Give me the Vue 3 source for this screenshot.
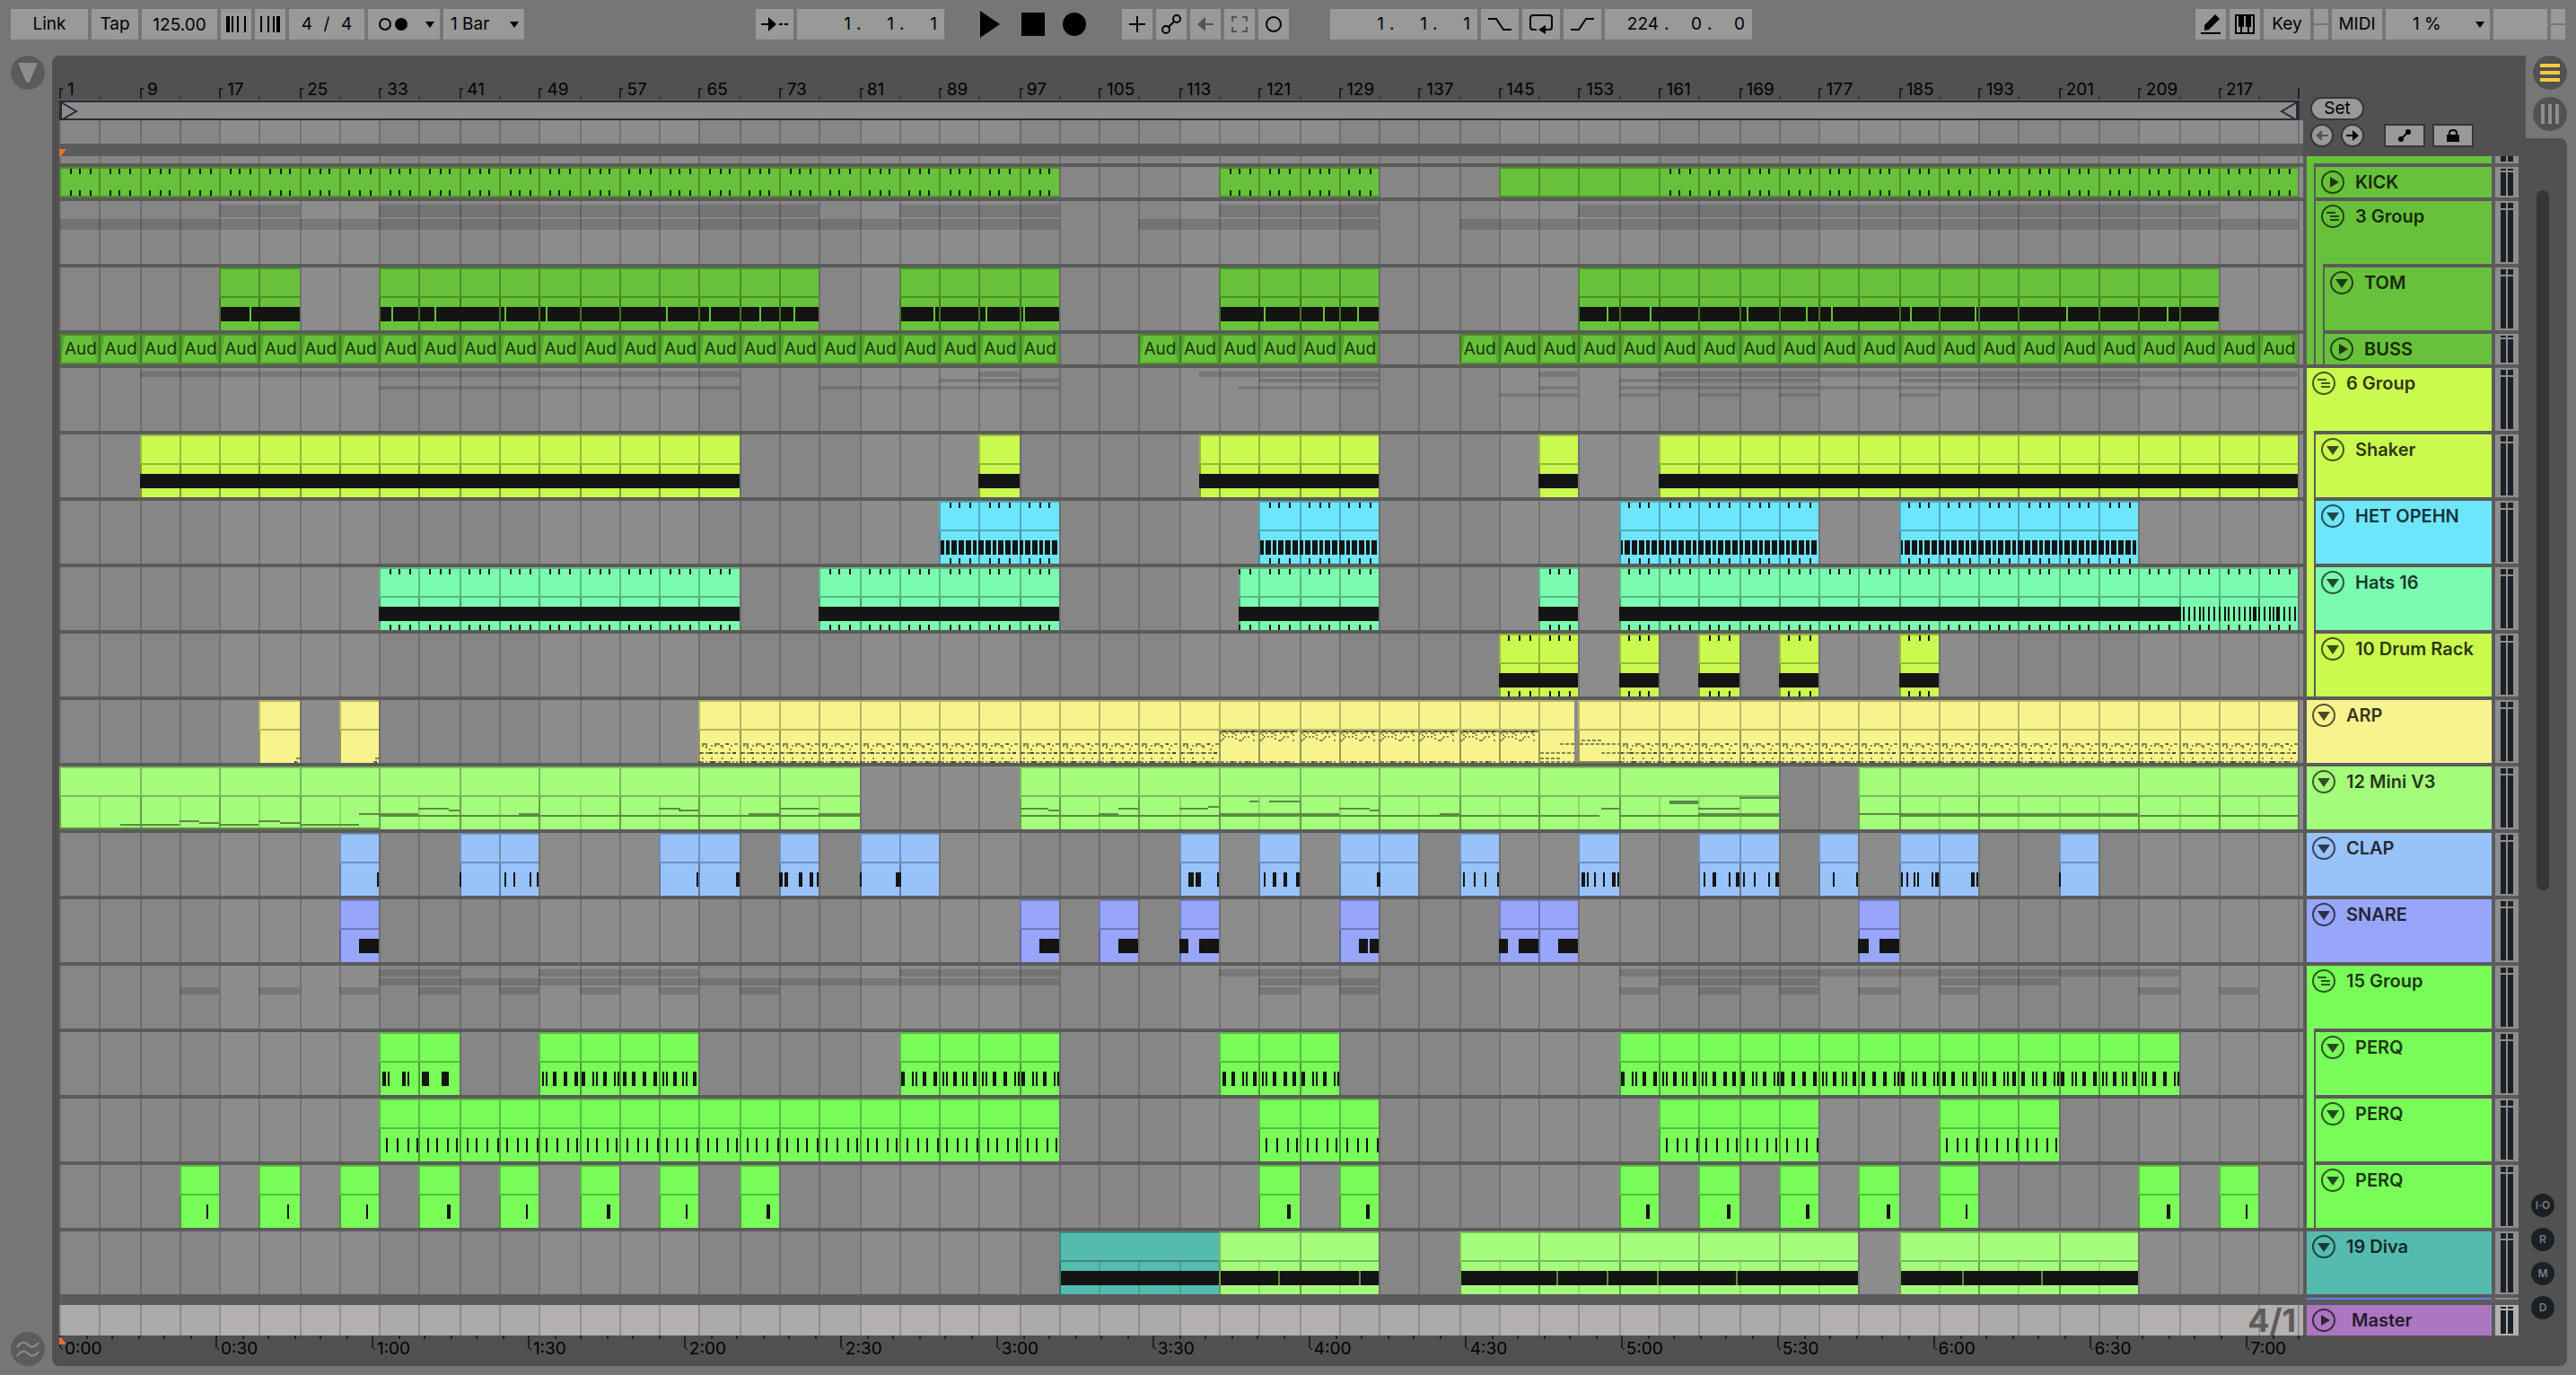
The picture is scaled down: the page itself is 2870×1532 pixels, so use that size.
<script setup>
const BAR = 11.1375
const END = 2494

// Converts a bar position to lane units on the two-pixel raster
const snap = (bar) => 2 * Math.round((bar * BAR) / 2)
const box = (x, y, w, h) => `M${x} ${y}h${w}v${h}h${-w}z`

const range = (a, b, step = 1) => {
  const out = []
  for (let i = a; i < b; i += step) out.push(i)
  return out
}

// Clip extents are in cells of four bars
const C = {
  kick: [[0, 25], [29, 33], [36, 56]],
  tom: [[4, 6], [8, 19], [21, 25], [29, 33], [38, 54]],
  buss: [[0, 25], [27, 33], [35, 56]],
  shaker: [[2, 17], [23, 24], [28.5, 33], [37, 38], [40, 56]],
  het: [[22, 25], [30, 33], [39, 44], [46, 52]],
  hats: [[8, 17], [19, 25], [29.5, 33], [37, 38], [39, 56]],
  drum: [[36, 38], [39, 40], [41, 42], [43, 44], [46, 47]],
  arp: [[5, 6], [7, 8], [16, 37.9], [38, 56]],
  mini: [[0, 20], [24, 43], [45, 56]],
  clap: [[7, 8], [10, 12], [15, 17], [18, 19], [20, 22], [28, 29], [30, 31], [32, 34], [35, 36], [38, 39], [41, 43], [44, 45], [46, 48], [50, 51]],
  snare: [[7, 8], [24, 25], [26, 27], [28, 29], [32, 33], [36, 38], [45, 46]],
  perq1: [[8, 10], [12, 16], [21, 25], [29, 32], [39, 53]],
  perq2: [[8, 25], [30, 33], [40, 44], [47, 50]],
  perq3: [[3, 4], [5, 6], [7, 8], [9, 10], [11, 12], [13, 14], [15, 16], [17, 18], [30, 31], [32, 33], [39, 40], [41, 42], [43, 44], [45, 46], [47, 48], [52, 53], [54, 55]],
  diva: [[25, 29, '#56bbaf'], [29, 33], [35, 45], [46, 52]],
}

const cellsOf = (clips) => clips.flatMap(([a, b]) => range(Math.ceil(a), b))
const band = (clips) => clips.map(([a, b]) => box(snap(a * 4), 44, snap(b * 4) - snap(a * 4), 16)).join('')
const bars = (list) => list.map(([x, w]) => box(x - 66, 44, w, 16)).join('')

// Edge marks, three in each cell
const marks = (clips, low) =>
  clips.flatMap(([a, b]) => range(a * 4, b * 4).filter((n) => n % 4).map((n) => box(snap(n), 2, 2, 6) + box(snap(n), low, 2, 6))).join('')

function tomNotes() {
  const gaps = [278, 436, 484, 562, 608, 742, 790, 846, 884, 1040, 1098, 1140, 1408, 1474, 1512, 1790, 1838, 1946, 2012, 2040, 2128, 2200, 2302, 2414]
  const cuts = gaps.map((x) => x - 66)
  return cellsOf(C.tom).map((c) => {
    const to = snap((c + 1) * 4)
    let x = snap(c * 4) + (c % 5 === 0 ? 0 : 2)
    let d = ''
    for (const g of cuts) {
      if (g > x && g < to - 2) {
        d += box(x, 44, g - x, 16)
        x = g + 2
      }
    }
    return d + box(x, 44, to - x, 16)
  }).join('')
}

function hetNotes() {
  return C.het.map(([a, b]) => range(0, (b - a) * 6).map((i) => {
    const x = snap(a * 4 + (i * 2) / 3) + (i ? 0 : 2)
    const next = snap(a * 4 + ((i + 1) * 2) / 3)
    return box(x, 44, next - x - 2, 16)
  }).join('')).join('')
}

function hatsNotes() {
  const solid = band([...C.hats.slice(0, 4), [39, 53]])
  const thin = range(212, 224, 0.5).map((n) => box(snap(n), 44, 2, 16)).join('')
  return solid + thin + [2446, 2470].map((x) => box(x, 44, 2, 16)).join('')
}

const hits = {
  12: 'PBBB', 13: 'BPBP', 14: 'BBBB', 15: 'PBPB', 21: 'BPBB', 22: 'PBPB', 23: 'PBBP', 24: 'BPBP',
  29: 'BBPB', 30: 'PBBB', 31: 'BPBP', 39: 'BPBB', 40: 'PBPB', 41: 'PBBB', 42: 'BPBP', 43: 'BBBB',
  44: 'PBPB', 45: 'BBBP', 46: 'BPBP', 47: 'BBPB', 48: 'PBPB', 49: 'BPBP', 50: 'BPBB', 51: 'PBPB', 52: 'PBBP',
}
function perqOneNotes() {
  let d = bars([[426, 4], [432, 2], [448, 4], [454, 2], [470, 8], [492, 8]])
  for (const [cell, kinds] of Object.entries(hits)) {
    [...kinds].forEach((kind, i) => {
      const x = snap(cell * 4 + i * 1.05 + 0.3)
      d += kind === 'B' ? box(x, 44, 4, 16) : box(x, 44, 2, 16) + box(x + 4, 44, 2, 16)
    })
  }
  return d
}
const perqTwoNotes = () => cellsOf(C.perq2).flatMap((c) => range(0, 4).map((i) => box(snap(c * 4 + i + 0.75), 44, 2, 16))).join('')
const perqThreeNotes = () => {
  const thin = [3, 5, 7, 11, 15, 47, 54]
  return C.perq3.map(([a]) => box(snap(a * 4 + 2.75), 44, thin.includes(a) ? 2 : 4, 16)).join('')
}

const clapNotes = () => bars([
  [420, 2], [512, 2], [562, 2], [572, 2], [590, 2], [598, 2], [776, 2], [820, 4], [868, 4], [874, 4], [890, 4], [902, 4], [910, 2],
  [958, 2], [998, 6], [1324, 6], [1332, 6], [1356, 2], [1408, 2], [1418, 4], [1430, 4], [1444, 4], [1534, 4], [1630, 2], [1642, 2],
  [1654, 2], [1668, 2], [1762, 4], [1768, 2], [1776, 2], [1786, 2], [1796, 4], [1802, 2], [1898, 2], [1908, 4], [1926, 2], [1934, 4],
  [1942, 2], [1954, 2], [1970, 2], [1978, 4], [2042, 2], [2068, 2], [2118, 2], [2124, 2], [2132, 2], [2136, 2], [2152, 2], [2156, 4],
  [2196, 4], [2202, 2], [2294, 2],
])
const snareNotes = () => bars([
  [400, 22], [1158, 22], [1246, 22], [1314, 10], [1336, 22], [1514, 10], [1526, 10], [1670, 10], [1692, 22], [1736, 22], [2070, 12], [2094, 22],
])

const miniLines = [
  [66, 422, 68, 2], [134, 200, 64, 2], [200, 222, 60, 2], [222, 244, 62, 2], [244, 288, 64, 2], [288, 312, 60, 2], [312, 334, 62, 2],
  [334, 400, 64, 2], [400, 422, 52, 2], [422, 466, 52, 4], [466, 500, 46, 2], [500, 512, 48, 2], [466, 958, 54, 2], [578, 600, 52, 2],
  [734, 758, 46, 2], [756, 778, 48, 2], [834, 868, 52, 2], [870, 912, 46, 2], [912, 958, 52, 2],
  [1136, 1168, 46, 2], [1168, 1180, 48, 2], [1136, 1782, 54, 2], [1224, 1246, 52, 2], [1246, 1268, 46, 2], [1314, 1346, 46, 2],
  [1346, 1358, 44, 2], [1358, 1492, 52, 2], [1392, 1402, 38, 2], [1414, 1448, 38, 2], [1492, 1526, 46, 2], [1526, 1536, 48, 2],
  [1604, 1626, 52, 2], [1784, 1804, 46, 2], [1804, 1982, 54, 2], [1860, 1892, 38, 4], [1892, 1938, 46, 2], [1892, 1982, 52, 2],
  [1938, 1982, 34, 2], [2070, 2382, 52, 2], [2116, 2560, 54, 2],
]
const miniNotes = () => miniLines.map(([a, b, y, h]) => box(a - 66, y, b - a, h)).join('')

// One arpeggio phrase: [x, y, width] within a cell
const phraseA = [
  [4, 48, 6], [18, 48, 6], [30, 48, 4], [40, 48, 4], [0, 50, 2], [4, 50, 2], [8, 50, 2], [14, 50, 2], [18, 50, 2], [24, 50, 4], [36, 50, 2],
  [8, 52, 2], [12, 54, 2], [26, 52, 2], [34, 54, 2], [0, 58, 6], [8, 58, 8], [18, 58, 4], [24, 58, 6], [32, 58, 4], [38, 58, 4],
  [4, 64, 2], [14, 64, 2], [26, 64, 2], [36, 64, 2], [0, 68, 6], [8, 68, 2], [12, 68, 8], [22, 68, 4], [28, 68, 8], [38, 68, 2], [42, 68, 2],
]
const accentA = [[2, 58, 2], [12, 58, 4], [26, 58, 2], [38, 58, 4], [32, 48, 2], [0, 68, 2], [14, 68, 4], [30, 68, 2]]
const phraseB = [
  [0, 34, 44], [2, 36, 2], [8, 36, 2], [14, 36, 4], [24, 36, 2], [30, 36, 2], [36, 36, 2], [4, 38, 2], [18, 38, 2], [38, 38, 2],
  [6, 40, 2], [10, 40, 2], [14, 40, 2], [28, 40, 2], [32, 40, 2], [4, 42, 2], [18, 42, 2], [26, 42, 2],
  [0, 44, 4], [22, 44, 4], [38, 44, 2], [0, 68, 6], [8, 68, 2], [12, 68, 8], [22, 68, 4], [28, 68, 8], [38, 68, 2],
]
const accentB = [[4, 34, 4], [12, 34, 2], [18, 34, 4], [28, 34, 4], [36, 34, 4], [14, 68, 2], [30, 68, 2]]
const stamp = (cells, notes) => cells.map((c) => notes.map(([x, y, w]) => box(snap(c * 4) + x, y, w, 2)).join('')).join('')
const dashes = (from, to, y) => range(from, to, 6).map((x) => box(x - 66, y, 4, 2)).join('')
const arpCellsA = [...range(16, 29), ...range(39, 56)]
const arpCellsB = range(29, 37)
const arpSoft = () => stamp(arpCellsA, phraseA) + stamp(arpCellsB, phraseB) +
  dashes(1738, 1754, 48) + dashes(1716, 1754, 58) + dashes(1716, 1738, 64) + dashes(1716, 1754, 68) +
  dashes(1762, 1782, 44) + dashes(1760, 1804, 48) + dashes(1784, 1804, 58) + box(1692, 68, 46, 2) +
  box(264, 64, 4, 2) + box(262, 68, 4, 2) + box(352, 64, 4, 2) + box(350, 68, 4, 2)
const arpDark = () => stamp(arpCellsA, accentA) + stamp(arpCellsB, accentB) + box(262, 68, 2, 2) + box(352, 68, 2, 2)

const divaCuts = [1424, 1514, 1734, 1790, 1846, 1934, 2186, 2274].map((x) => x - 66)
const divaSplits = () => divaCuts.map((x) => box(x, 44, 2, 16)).join('')
const divaNotes = () => C.diva.map(([a, b]) => box(snap(a * 4) + 2, 44, snap(b * 4) - snap(a * 4) - 2, 16)).join('')

// Builds the painted layers of one lane
function paint(track) {
  const h = track.h
  const layers = []
  const strips = (track.strips || []).map(([clips, y, sh]) => clips.map(([a, b]) => box(snap(a * 4), y, snap(b * 4) - snap(a * 4), sh)).join('')).join('')
  if (strips) layers.push({ d: strips, fill: 'rgba(0,0,0,.14)' })
  if (!track.clips) return layers
  const byColor = {}
  let head = ''
  let body = ''
  let faint = ''
  for (const [a, b, own] of track.clips) {
    const x0 = snap(a * 4)
    const w = snap(b * 4) - x0
    const color = own || track.clipColor || track.color
    byColor[color] = (byColor[color] || '') + box(x0, 0, w, h)
    head += box(x0, 0, w, 2)
    head += h > 40 ? box(x0, 32, w, 2) : box(x0, h - 2, w, 2)
    const top = h > 40 ? 30 : h - 4
    const seams = new Set([a, ...(track.seams || range(Math.ceil(a), b)).filter((s) => s >= a && s < b)])
    for (const s of seams) {
      head += box(snap(s * 4), 2, 2, top)
      if (h > 40) body += box(snap(s * 4), 34, 2, h - 34)
    }
    for (const c of range(Math.ceil(a), b)) if (!seams.has(c)) faint += box(snap(c * 4), 34, 2, h - 34)
  }
  for (const [fill, d] of Object.entries(byColor)) layers.push({ d, fill })
  layers.push({ d: head, fill: 'rgba(0,0,0,.26)' }, { d: body, fill: 'rgba(0,0,0,.38)' }, { d: faint, fill: 'rgba(0,0,0,.15)' })
  if (track.fades) {
    const d = cellsOf(track.clips).map((c) => {
      const x = snap(c * 4)
      const r = snap(c * 4 + 4)
      return `M${x} 2h6L${x + 2} 32h-2zM${r} 2h-8L${r - 2} 32h2z`
    }).join('')
    layers.push({ d, fill: 'rgba(0,0,0,.16)' })
  }
  if (track.soft) layers.push({ d: track.soft, fill: track.softFill })
  if (track.notes) layers.push({ d: track.notes, fill: track.noteFill || '#141414' })
  if (track.splits) layers.push({ d: track.splits, fill: '#5b8c45' })
  return layers
}

const GREEN = '#67c13a'
const LIME = '#cbfa4f'
const LEAF = '#79fd59'

const tracks = [
  { name: 'KICK', h: 34, icon: 'play', rails: [GREEN], color: GREEN, clips: C.kick, notes: marks([[0, 25], [29, 33], [40, 56]], 26) },
  { name: '3 Group', h: 70, icon: 'group', rails: [GREEN], color: GREEN, strips: [[C.tom, 4, 14], [C.buss, 20, 12]] },
  { name: 'TOM', h: 70, icon: 'fold', rails: [GREEN, GREEN], color: GREEN, clips: C.tom, notes: tomNotes() },
  { name: 'BUSS', h: 34, icon: 'play', rails: [GREEN, GREEN], color: GREEN, clips: C.buss, fades: true, labels: cellsOf(C.buss) },
  { name: '6 Group', h: 70, icon: 'group', rails: [], color: LIME, strips: [[C.shaker, 4, 6], [C.het, 12, 4], [C.hats, 20, 4], [C.drum, 28, 4]] },
  { name: 'Shaker', h: 70, icon: 'fold', rails: [LIME], color: LIME, clips: C.shaker, notes: band(C.shaker) },
  { name: 'HET OPEHN', h: 70, icon: 'fold', rails: [LIME], color: '#6de6fd', clips: C.het, notes: hetNotes() + marks(C.het, 64) },
  { name: 'Hats 16', h: 70, icon: 'fold', rails: [LIME], color: '#7afbb0', clips: C.hats, notes: hatsNotes() + marks(C.hats, 64) },
  { name: '10 Drum Rack', h: 70, icon: 'fold', rails: [LIME], color: LIME, clips: C.drum, notes: band(C.drum) + marks(C.drum, 64) },
  { name: 'ARP', h: 70, icon: 'fold', rails: [], color: '#f7f48d', clips: C.arp, soft: arpSoft(), softFill: '#8a8750', notes: arpDark(), noteFill: '#4c4a2c' },
  { name: '12 Mini V3', h: 70, icon: 'fold', rails: [], color: '#a5fd7c', clips: C.mini, seams: [...range(0, 20, 2), 24, ...range(25, 41, 2), 45, 46, 48, 52, 54], notes: miniNotes(), noteFill: '#5b8c45' },
  { name: 'CLAP', h: 70, icon: 'fold', rails: [], color: '#98c2fa', clips: C.clap, notes: clapNotes() },
  { name: 'SNARE', h: 70, icon: 'fold', rails: [], color: '#97a5fa', clips: C.snare, notes: snareNotes() },
  { name: '15 Group', h: 70, icon: 'group', rails: [], color: LEAF, strips: [[C.perq1, 4, 8], [C.perq2, 14, 8], [C.perq3, 24, 8]] },
  { name: 'PERQ', h: 70, icon: 'fold', rails: [LEAF], color: LEAF, clips: C.perq1, notes: perqOneNotes() },
  { name: 'PERQ', h: 70, icon: 'fold', rails: [LEAF], color: LEAF, clips: C.perq2, notes: perqTwoNotes() },
  { name: 'PERQ', h: 70, icon: 'fold', rails: [LEAF], color: LEAF, clips: C.perq3, notes: perqThreeNotes() },
  { name: '19 Diva', h: 70, icon: 'fold', rails: [], color: '#56bbaf', clipColor: '#a5fd7c', clips: C.diva, seams: [25, 29, 31, 35, 37, 39, 41, 43, 46, 48, 50], notes: divaNotes(), splits: divaSplits() },
].map((t) => ({ ...t, layers: paint(t) }))

const shade = range(0, 224, 32).map((b) => box(snap(b), 0, snap(b + 16) - snap(b), 70)).join('')
const gridLines = range(0, 57).map((c) => box(snap(c * 4), 0, 2, 70)).join('')
const barTicks = range(0, 28).map((i) => box(snap(i * 8), 0, 4, 2) + box(snap(i * 8), 2, 2, 10) + box(snap(i * 8 + 4), 10, 2, 2)).join('') + box(END, 0, 2, 12)
const FIVE = (5 / 1.92) * BAR
const timeTicks = range(0, 86).map((i) => {
  const x = 2 * Math.round((i * FIVE) / 2)
  return i % 6 ? box(x, 0, 2, 4) : box(x, 0, 2, 14) + box(x + 2, 14, 2, 2)
}).join('') + box(END, 0, 2, 4)

const barLabels = range(0, 28).map((i) => 1 + i * 8)
const timeLabels = range(0, 15).map((i) => `${Math.floor(i / 2)}:${i % 2 ? '30' : '00'}`)
</script>

<template>
  <div class="app">
    <header class="toolbar">
      <div class="group">
        <button class="ctl w86">Link</button>
        <button class="ctl w52">Tap</button>
        <input class="ctl w84" value="125.00" aria-label="Tempo" />
        <button class="ctl w34" aria-label="Nudge down">
          <svg width="22" height="18"><path d="M0 0h4v18H0zM6 0h2v18H6zM12 0h2v18h-2zM20 0h2v18h-2z" /></svg>
        </button>
        <button class="ctl w34" aria-label="Nudge up">
          <svg width="22" height="18"><path d="M0 0h2v18H0zM8 0h2v18H8zM14 0h2v18h-2zM18 0h4v18h-4z" /></svg>
        </button>
        <div class="ctl signature">
          <input value="4" aria-label="Beats" class="end" /><span>/</span><input value="4" aria-label="Beat value" />
        </div>
        <button class="ctl metro" aria-label="Metronome">
          <svg width="32" height="18"><circle cx="7" cy="9" r="6" fill="none" stroke="#000" stroke-width="2" /><circle cx="25" cy="9" r="7" /></svg>
          <svg width="10" height="7"><path d="M0 0h10L5 7z" /></svg>
        </button>
        <div class="pick w90">
          <select class="ctl" aria-label="Quantization"><option>1 Bar</option></select>
          <svg width="10" height="7"><path d="M0 0h10L5 7z" /></svg>
        </div>
      </div>

      <div class="group">
        <button class="ctl w42" aria-label="Follow">
          <svg width="30" height="18"><path d="M0 8h8V1l9 8-9 8v-7H0zM20 8h4v2h-4zM26 8h4v2h-4z" /></svg>
        </button>
        <div class="ctl position">
          <input value="1" aria-label="Bar" class="first" /><span>.</span><input value="1" aria-label="Beat" /><span>.</span><input value="1" aria-label="Sixteenth" />
        </div>
        <div class="transport">
          <button aria-label="Play"><svg width="26" height="30"><path d="M0 0l22 15L0 30z" /></svg></button>
          <button aria-label="Stop"><svg width="26" height="30"><path d="M0 2h26v26H0z" /></svg></button>
          <button aria-label="Record"><svg width="26" height="30"><circle cx="13" cy="15" r="13" /></svg></button>
        </div>
        <button class="ctl w34" aria-label="Overdub"><svg width="18" height="18"><path d="M8 0h2v8h8v2h-8v8H8v-8H0V8h8z" /></svg></button>
        <button class="ctl w34" aria-label="Automation arm">
          <svg width="24" height="22" fill="none" stroke="#000" stroke-width="2"><circle cx="6" cy="17" r="4" /><circle cx="18" cy="5" r="4" /><path d="M9 14l6-6" /></svg>
        </button>
        <button class="ctl w34 dim" aria-label="Re-enable automation"><svg width="18" height="16"><path d="M0 8l9-8v7h9v2H9v7z" /></svg></button>
        <button class="ctl w34 dim" aria-label="Capture">
          <svg width="18" height="18" fill="none" stroke="#555" stroke-width="2"><path d="M1 6V1h5M12 1h5v5M17 12v5h-5M6 17H1v-5" /></svg>
        </button>
        <button class="ctl w34" aria-label="Session record"><svg width="20" height="20"><circle cx="10" cy="10" r="8" fill="none" stroke="#000" stroke-width="2" /></svg></button>
        <div class="ctl position late">
          <input value="1" aria-label="Loop bar" class="first" /><span>.</span><input value="1" aria-label="Loop beat" /><span>.</span><input value="1" aria-label="Loop sixteenth" />
        </div>
        <button class="ctl w42" aria-label="Punch in"><svg width="26" height="14" fill="none" stroke="#000" stroke-width="2"><path d="M0 1h9l8 12h9" /></svg></button>
        <button class="ctl w42" aria-label="Loop">
          <svg width="26" height="22"><path d="M8 17H4q-3 0-3-3V4q0-3 3-3h18q3 0 3 3v10q0 3-3 3h-4" fill="none" stroke="#000" stroke-width="2" /><path d="M10 17l8-5v10z" /></svg>
        </button>
        <button class="ctl w42" aria-label="Punch out"><svg width="26" height="14" fill="none" stroke="#000" stroke-width="2"><path d="M0 13h9l8-12h9" /></svg></button>
        <div class="ctl position">
          <input value="224" aria-label="Length bars" class="first" /><span>.</span><input value="0" aria-label="Length beats" /><span>.</span><input value="0" aria-label="Length sixteenths" />
        </div>
      </div>

      <div class="group">
        <button class="ctl w34" aria-label="Draw mode"><svg width="22" height="22"><path d="M4 18v-6L16 0l5 5L9 17zM0 20h22v2H0z" /></svg></button>
        <button class="ctl w34" aria-label="Computer keyboard">
          <svg width="22" height="22"><path d="M1 1h20v20H1z" fill="none" stroke="#000" stroke-width="2" /><path d="M4 1h6v13H4zM12 1h6v13h-6zM6 14h2v7H6zM14 14h2v7h-2z" /></svg>
        </button>
        <button class="ctl w52">Key</button>
        <span class="leds"><i /><i /></span>
        <button class="ctl w56">MIDI</button>
        <div class="pick w116">
          <select class="ctl cpu" aria-label="CPU load"><option>1 %</option></select>
          <svg width="10" height="7"><path d="M0 0h10L5 7z" /></svg>
        </div>
        <span class="ctl w60" />
        <span class="leds"><i /><i /></span>
      </div>
    </header>

    <div class="main">
      <aside class="left">
        <button class="disc" aria-label="Show browser"><svg width="22" height="22"><path d="M2 0h18q2 0 1 2l-8 19q-2 2-4 0L1 2q-1-2 1-2z" fill="#8d8d8d" /></svg></button>
        <button class="disc" aria-label="Groove pool">
          <svg width="26" height="20" fill="none" stroke="#8d8d8d" stroke-width="2"><path d="M1 8q6-9 12-3t12-2M1 18q6-9 12-3t12-2" /></svg>
        </button>
      </aside>

      <main class="panel">
        <div class="top">
          <div class="timeline">
            <div class="ruler">
              <div class="barnums"><span v-for="n in barLabels" :key="n">{{ n }}</span></div>
              <svg class="ticks" height="12" viewBox="0 0 2500 12" preserveAspectRatio="none"><path :d="barTicks" /></svg>
            </div>
            <div class="loop">
              <svg width="20" height="20"><path d="M1 0l17 10L1 20z" /></svg>
              <svg width="20" height="20"><path d="M19 0L2 10l17 10z" /></svg>
            </div>
            <svg class="lane" height="26" viewBox="0 0 2500 26" preserveAspectRatio="none">
              <path :d="shade" class="shade" /><path :d="gridLines" class="lines" />
            </svg>
            <div class="scrub"><svg width="8" height="8"><path d="M0 0h8L2 8H0z" fill="#e8702a" /></svg></div>
          </div>
          <div class="locators">
            <button class="pill">Set</button>
            <div class="tools">
              <button class="round" aria-label="Previous locator"><svg width="14" height="14" fill="#555"><path d="M0 7l7-6v5h7v2H7v5z" /></svg></button>
              <button class="round" aria-label="Next locator"><svg width="14" height="14"><path d="M14 7L7 1v5H0v2h7v5z" /></svg></button>
              <button class="flat push" aria-label="Automation mode">
                <svg width="14" height="14"><circle cx="3" cy="11" r="3" /><circle cx="11" cy="3" r="3" /><path d="M3 11l8-8" stroke="#000" stroke-width="2" /></svg>
              </button>
              <button class="flat" aria-label="Lock envelopes">
                <svg width="14" height="14"><path d="M0 6h14v8H0z" /><path d="M3 7V4q0-3 4-3t4 3v3" fill="none" stroke="#000" stroke-width="2" /></svg>
              </button>
            </div>
          </div>
        </div>

        <div class="tracks">
          <div class="row sliver">
            <svg class="lane" height="8" viewBox="0 0 2500 8" preserveAspectRatio="none"><path :d="shade" class="shade" /><path :d="gridLines" class="lines" /></svg>
            <div class="head"><div class="title green" /></div>
            <div class="meter"><span><i class="rest" /></span><span><i class="rest" /></span></div>
          </div>

          <div v-for="(t, i) in tracks" :key="i" class="row" :class="{ small: t.h < 40 }">
            <div class="lanebox">
              <svg class="lane" :height="t.h" :viewBox="`0 0 2500 ${t.h}`" preserveAspectRatio="none">
                <path :d="shade" class="shade" /><path :d="gridLines" class="lines" />
                <path v-for="(l, k) in t.layers" :key="k" :d="l.d" :fill="l.fill" />
              </svg>
              <div v-if="t.labels" class="cliplabels">
                <span v-for="c in t.labels" :key="c" :style="{ gridColumn: c + 1 }">Aud</span>
              </div>
            </div>
            <div class="head">
              <div v-for="(r, k) in t.rails" :key="k" class="rail" :style="{ background: r }" />
              <div class="title" :style="{ background: t.color }">
                <button class="fold" :aria-label="`Fold ${t.name}`">
                  <svg width="26" height="26">
                    <circle cx="13" cy="13" r="12" />
                    <path v-if="t.icon === 'play'" class="solid" d="M10 7l10 6-10 6z" />
                    <path v-else-if="t.icon === 'fold'" class="solid" d="M6 9h14l-7 10z" />
                    <path v-else d="M6 9h10M10 13h10M10 17h10" />
                  </svg>
                </button>
                <span>{{ t.name }}</span>
              </div>
            </div>
            <div class="meter"><span><i class="peak" /><i class="rest" /></span><span><i class="peak" /><i class="rest" /></span></div>
          </div>

          <div class="row hair"><div class="lanebox" /><div class="head"><div class="title blue" /></div><div class="meter" /></div>

          <div class="row small master">
            <div class="lanebox">
              <svg class="lane" height="34" viewBox="0 0 2500 34" preserveAspectRatio="none"><path :d="shade" class="shade" /><path :d="gridLines" class="lines" /></svg>
              <span class="grid-size">4/1</span>
            </div>
            <div class="head">
              <div class="title violet">
                <button class="fold" aria-label="Fold Master"><svg width="26" height="26"><circle cx="13" cy="13" r="12" /><path class="solid" d="M10 7l10 6-10 6z" /></svg></button>
                <span>Master</span>
              </div>
            </div>
            <div class="meter"><span><i class="peak" /><i class="rest" /></span><span><i class="peak" /><i class="rest" /></span></div>
          </div>
        </div>

        <div class="time">
          <svg class="ticks" height="16" viewBox="0 0 2500 16" preserveAspectRatio="none"><path :d="timeTicks" /></svg>
          <svg class="flag" width="8" height="8"><path d="M0 0h2l6 8H0z" fill="#e8702a" /></svg>
          <div class="timenums"><span v-for="t in timeLabels" :key="t">{{ t }}</span></div>
        </div>
      </main>

      <aside class="right">
        <div class="views">
          <button class="disc on" aria-label="Arrangement view"><svg width="22" height="20"><path d="M0 0h22v4H0zM0 8h22v4H0zM0 16h22v4H0z" fill="#f9c940" /></svg></button>
          <button class="disc on" aria-label="Session view"><svg width="20" height="22"><path d="M0 0h4v22H0zM8 0h4v22H8zM16 0h4v22h-4z" fill="#8d8d8d" /></svg></button>
        </div>
        <div class="rail-right">
          <div class="scroll" />
          <div class="show">
            <button>I·O</button><button>R</button><button>M</button><button>D</button>
          </div>
        </div>
      </aside>
    </div>
  </div>
</template>

<style>
body {
  margin: 0;
  background: #767676;
}
</style>

<style scoped>
* {
  box-sizing: border-box;
}
.app {
  font-family: Inter, "Liberation Sans", sans-serif;
  font-size: 19px;
  line-height: 24px;
  color: #000;
  padding-bottom: 10px;
}
button,
input,
select {
  font: inherit;
  color: inherit;
  margin: 0;
  padding: 0;
  border: 0;
  border-radius: 0;
  background: none;
  appearance: none;
}
svg {
  display: block;
  flex: none;
}
.toolbar {
  display: flex;
  padding: 10px 12px 18px;
}
.group {
  display: flex;
  gap: 4px;
}
.toolbar .group:first-child {
  flex: 258 0 auto;
}
.toolbar .group:last-child {
  flex: 494 0 auto;
  justify-content: flex-end;
}
.ctl {
  display: flex;
  align-items: center;
  justify-content: center;
  height: 34px;
  background: #999;
  text-align: center;
}
.w34 { width: 34px; }
.w42 { width: 42px; }
.w52 { width: 52px; }
.w56 { width: 56px; }
.w60 { width: 60px; }
.w84 { width: 84px; }
.w86 { width: 86px; }
.w90 { width: 90px; }
.w116 { width: 116px; }
.dim { fill: #555; }
.signature { width: 84px; }
.signature input { width: 26px; }
.signature span { width: 32px; }
.signature .end { text-align: right; }
.metro {
  width: 80px;
  gap: 20px;
  padding-left: 6px;
}
.pick {
  position: relative;
}
.pick select {
  width: 100%;
  padding-left: 8px;
  text-align: left;
}
.pick .cpu {
  padding-left: 30px;
}
.pick svg {
  position: absolute;
  right: 6px;
  top: 14px;
  pointer-events: none;
}
.position {
  width: 164px;
  padding-right: 8px;
}
.position input {
  width: 24px;
  text-align: right;
}
.position .first {
  flex: 1;
  min-width: 0;
}
.position span {
  width: 24px;
  padding-left: 6px;
  text-align: left;
}
.late {
  margin-left: 42px;
}
.transport {
  display: flex;
  align-items: center;
  gap: 20px;
  margin: 0 36px;
}
.leds {
  display: flex;
  flex-direction: column;
  gap: 2px;
  width: 16px;
  height: 34px;
}
.leds i {
  flex: 1;
  background: #999;
}
.main {
  display: flex;
}
.left {
  display: flex;
  flex-direction: column;
  justify-content: space-between;
  width: 58px;
  padding-left: 12px;
}
.disc {
  display: flex;
  align-items: center;
  justify-content: center;
  width: 38px;
  height: 38px;
  border-radius: 50%;
  background: #5b5b5b;
}
.disc.on {
  background: #515151;
}
.panel {
  flex: 1;
  min-width: 0;
  padding: 0 8px;
  border-radius: 8px 0 0 8px;
  background: #515151;
}
.top {
  display: flex;
}
.timeline {
  flex: 1;
  min-width: 0;
  padding-right: 2px;
}
.ruler {
  padding-top: 26px;
  border-bottom: 2px solid #5b5b5b;
}
.ticks {
  width: 100%;
  fill: #222;
}
.ruler .ticks {
  margin-top: -14px;
}
.barnums {
  display: grid;
  grid-template-columns: repeat(28, 1fr);
  padding-right: 6px;
}
.barnums span {
  padding-left: 9px;
}
.loop {
  display: flex;
  justify-content: space-between;
  height: 22px;
  border: 2px solid #252b38;
  border-width: 2px 2px 2px 1px;
  margin-right: 4px;
  background: #8d8d8d;
}
.loop svg {
  height: 18px;
  fill: none;
  stroke: #252b38;
  stroke-width: 2;
}
.lane {
  width: 100%;
  background: #8c8c8c;
}
.shade {
  fill: #868686;
}
.lines {
  fill: rgba(0, 0, 0, .18);
}
.scrub {
  height: 14px;
  padding-top: 6px;
  background: #5b5b5b;
}
.locators {
  width: 238px;
  padding: 46px 0 0 6px;
}
.pill,
.round,
.flat {
  display: flex;
  align-items: center;
  justify-content: center;
  height: 26px;
  border: 2px solid #363636;
  background: #999;
}
.pill {
  width: 60px;
  border-radius: 13px;
}
.tools {
  display: flex;
  gap: 8px;
  margin-top: 4px;
}
.round {
  width: 26px;
  border-radius: 50%;
}
.flat {
  width: 46px;
}
.push {
  margin-left: 14px;
}
.tracks {
  display: flex;
  flex-direction: column;
  gap: 4px;
  background: #5b5b5b;
}
.row {
  display: flex;
  gap: 4px;
  height: 70px;
}
.row.small {
  height: 34px;
}
.row.sliver {
  height: 8px;
}
.row.hair {
  height: 2px;
}
.row > .lane,
.lanebox {
  flex: 1;
  min-width: 0;
}
.lanebox {
  position: relative;
}
.cliplabels {
  position: absolute;
  inset: 0 6px 0 0;
  display: grid;
  grid-template-columns: repeat(56, minmax(0, 1fr));
  align-items: center;
  color: rgba(0, 0, 0, .75);
}
.cliplabels span {
  grid-row: 1;
  padding-left: 6px;
}
.head {
  display: flex;
  flex: none;
  gap: 2px;
  width: 206px;
}
.rail {
  width: 8px;
  margin-top: -4px;
}
.title {
  display: flex;
  flex: 1;
  align-items: flex-start;
  gap: 12px;
  padding: 4px 0 0 6px;
  color: rgba(0, 0, 0, .8);
  font-size: 20px;
  font-weight: 600;
  white-space: nowrap;
}
.title span {
  line-height: 26px;
}
.green { background: #67c13a; }
.blue { background: #5a80e6; padding: 0; }
.violet {
  gap: 18px;
  background: #ab77c0;
}
.fold svg {
  fill: none;
  stroke: rgba(0, 0, 0, .65);
  stroke-width: 2;
}
.fold .solid {
  fill: rgba(0, 0, 0, .7);
  stroke: none;
}
.meter {
  display: flex;
  flex: none;
  gap: 2px;
  width: 26px;
  padding: 2px 6px;
  background: #8d8d8d;
}
.meter span {
  display: flex;
  flex: none;
  flex-direction: column;
  gap: 2px;
  width: 6px;
}
.meter i {
  background: #1a2025;
}
.peak {
  height: 6px;
}
.small .peak {
  height: 2px;
}
.rest {
  flex: 1;
}
.sliver .meter {
  padding-top: 0;
}
.hair .meter {
  padding: 0;
}
.master {
  margin-top: 2px;
}
.master .lane {
  background: #b4b0af;
}
.master .shade {
  fill: #ababa9;
}
.master .meter {
  background: #b4b0af;
}
.grid-size {
  position: absolute;
  right: 8px;
  top: 0;
  color: #5d5b59;
  font-size: 36px;
  font-weight: 700;
  line-height: 34px;
}
.time {
  position: relative;
  height: 34px;
  padding-right: 240px;
}
.flag {
  position: absolute;
  left: 0;
  top: 2px;
}
.timenums {
  display: grid;
  grid-template-columns: repeat(14, 125fr) 42fr;
  margin-top: -13px;
  padding-right: 6px;
}
.timenums span {
  width: 0;
  padding-left: 6px;
}
.right {
  display: flex;
  flex-direction: column;
  width: 56px;
  padding-right: 10px;
}
.views {
  display: flex;
  flex-direction: column;
  gap: 8px;
  height: 92px;
  padding-left: 8px;
}
.rail-right {
  display: flex;
  flex: 1;
  flex-direction: column;
  align-items: center;
  justify-content: space-between;
  padding: 58px 8px 52px 0;
  border-radius: 0 8px 8px 0;
  background: #515151;
}
.scroll {
  width: 14px;
  height: 62%;
  border-radius: 7px;
  background: #363636;
}
.show {
  display: flex;
  flex-direction: column;
  gap: 12px;
}
.show button {
  width: 26px;
  height: 26px;
  border-radius: 50%;
  background: #1a2025;
  color: #7a7a7a;
  font-size: 12px;
  font-weight: 600;
  line-height: 26px;
}
</style>
